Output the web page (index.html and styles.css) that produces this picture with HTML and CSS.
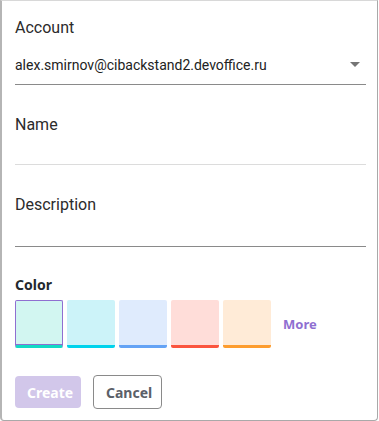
FILE: index.html
```html
<!DOCTYPE html>
<html lang="en">
<head>
    <meta charset="UTF-8">
    <title>New calendar</title>
    <link rel="stylesheet" href="styles.css">
</head>
<body>
    <div class="dialog">
        <div class="field">
            <label class="field-label">Account</label>
            <div class="select">
                <span class="select-value">alex.smirnov@cibackstand2.devoffice.ru</span>
                <span class="select-arrow"></span>
            </div>
        </div>

        <div class="field">
            <label class="field-label">Name</label>
            <div class="input input-light"></div>
        </div>

        <div class="field">
            <label class="field-label">Description</label>
            <div class="input input-dark"></div>
        </div>

        <div class="color-block">
            <div class="color-title">Color</div>
            <div class="swatches">
                <div class="swatch selected" style="background:#d2f6f1; border-bottom-color:#13dac5"></div>
                <div class="swatch" style="background:#ccf3f9; border-bottom-color:#00d3ec"></div>
                <div class="swatch" style="background:#dfebfd; border-bottom-color:#64a3f5"></div>
                <div class="swatch" style="background:#ffddd9; border-bottom-color:#fb553f"></div>
                <div class="swatch" style="background:#ffebd7; border-bottom-color:#fd9d2f"></div>
                <span class="more">More</span>
            </div>
        </div>

        <div class="actions">
            <button class="btn btn-create" disabled>Create</button>
            <button class="btn btn-cancel">Cancel</button>
        </div>
    </div>
</body>
</html>
```

FILE: styles.css
```css
* {
    box-sizing: border-box;
}

body {
    margin: 0;
    background: #fff;
    font-family: Roboto, "Liberation Sans", sans-serif;
}

.dialog {
    width: 378px;
    height: 421px;
    border: 1px solid #a9a9a9;
    border-left: 2px solid #b5b5b5;
    border-top-color: #d8d8d8;
    border-radius: 0 0 4px 4px;
    padding: 17px 11px 0 13px;
}

.field-label {
    display: block;
    font-size: 16px;
    color: #2b2b2b;
    line-height: 20px;
}

.select {
    display: flex;
    align-items: center;
    justify-content: space-between;
    height: 38px;
    margin-top: 9px;
    border-bottom: 1px solid #8a8a8a;
    padding-bottom: 2px;
}

.select-value {
    font-size: 14px;
    color: #222;
}

.select-arrow {
    width: 0;
    height: 0;
    border-left: 5px solid transparent;
    border-right: 5px solid transparent;
    border-top: 5px solid #757575;
    margin-right: 6px;
}

.field + .field {
    margin-top: 30px;
}

.input {
    height: 23px;
    margin-top: 7px;
}

.input-light {
    border-bottom: 1px solid #dcdcdc;
}

.input-dark {
    border-bottom: 1px solid #8a8a8a;
    height: 25px;
}

.color-block {
    margin-top: 29px;
}

.color-title {
    font-family: "Noto Sans", sans-serif;
    font-weight: bold;
    font-size: 14px;
    color: #24292e;
    line-height: 18px;
}

.swatches {
    display: flex;
    align-items: center;
    gap: 4px;
    margin-top: 6px;
}

.swatch {
    width: 48px;
    height: 48px;
    border-radius: 2px;
    border-bottom: 3px solid;
}

.swatch.selected {
    border: 1px solid #8f6fd1;
    border-bottom: 3px solid #13dac5;
    box-shadow: inset 0 -1px 0 #8f6fd1;
}

.more {
    margin-left: 8px;
    font-family: "Noto Sans", sans-serif;
    font-weight: bold;
    font-size: 13px;
    color: #8f6fd1;
}

.actions {
    display: flex;
    align-items: center;
    gap: 12px;
    margin-top: 27px;
}

.btn {
    height: 32px;
    border-radius: 4px;
    font-family: "Noto Sans", sans-serif;
    font-weight: bold;
    font-size: 14px;
    padding: 0 12px;
}

.btn-create {
    background: #d2c7ea;
    color: #fff;
    border: none;
    width: 66px;
}

.btn-cancel {
    background: #fff;
    color: #5b6068;
    border: 1px solid #8a8a8a;
    height: 34px;
    width: 69px;
}
```
